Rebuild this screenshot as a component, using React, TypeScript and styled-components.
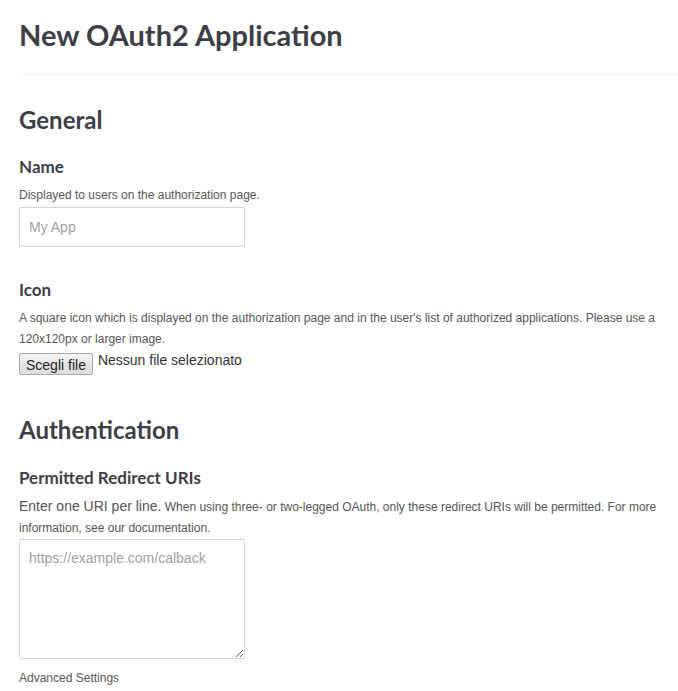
import React from 'react';
import styled, { createGlobalStyle } from 'styled-components';

const GlobalStyle = createGlobalStyle`
  html, body {
    margin: 0;
    padding: 0;
    background: #ffffff;
  }
  body {
    font-family: "Liberation Sans", Arial, sans-serif;
    color: #555555;
  }
`;

const Page = styled.div`
  padding: 17px 0 0 19px;
  display: flex;
  flex-direction: column;
`;

const PageTitle = styled.h1`
  margin: 0;
  font-family: "Lato", "Open Sans", sans-serif;
  font-size: 29px;
  font-weight: 700;
  line-height: 36px;
  color: #3d3e47;
`;

const Divider = styled.hr`
  margin: 21px 0 0 0;
  border: none;
  border-top: 1px solid #efefef;
`;

const SectionTitle = styled.h2<{ $gap: number }>`
  margin: ${(p) => p.$gap}px 0 0 0;
  font-family: "Lato", "Open Sans", sans-serif;
  font-size: 24px;
  font-weight: 700;
  line-height: 30px;
  color: #3d3e47;
`;

const FieldLabel = styled.h3<{ $gap: number }>`
  margin: ${(p) => p.$gap}px 0 0 0;
  font-family: "Lato", "Open Sans", sans-serif;
  font-size: 17px;
  font-weight: 700;
  line-height: 22px;
  color: #3d3e47;
`;

const Hint = styled.p`
  margin: 7px 0 0 0;
  padding-right: 19px;
  font-size: 12px;
  line-height: 21px;
  color: #555555;
`;

const Lead = styled.span`
  font-size: 14px;
`;

const TextInput = styled.input`
  box-sizing: border-box;
  margin-top: 1px;
  width: 226px;
  height: 40px;
  padding: 0 9px;
  border: 1px solid #d5d5d5;
  border-radius: 2px;
  font-family: "Liberation Sans", Arial, sans-serif;
  font-size: 14px;
  color: #333;
  outline: none;
  &::placeholder {
    color: #a0a0a0;
  }
`;

const TextArea = styled.textarea`
  box-sizing: border-box;
  margin-top: 0;
  width: 226px;
  height: 120px;
  padding: 10px 9px;
  border: 1px solid #d5d5d5;
  border-radius: 2px;
  font-family: "Liberation Sans", Arial, sans-serif;
  font-size: 14px;
  color: #333;
  outline: none;
  resize: both;
  &::placeholder {
    color: #a0a0a0;
  }
`;

const FileRow = styled.div`
  margin-top: 3px;
  display: flex;
  align-items: flex-start;
  gap: 5px;
`;

const FileButton = styled.button`
  box-sizing: border-box;
  height: 22px;
  padding: 1px 6px 0;
  border: 1px solid #a9a9a9;
  border-radius: 2px;
  background: linear-gradient(#f2f2f2, #dcdcdc);
  font-family: "Liberation Sans", Arial, sans-serif;
  font-size: 14px;
  line-height: 20px;
  color: #222;
`;

const FileStatus = styled.span`
  font-size: 14px;
  line-height: 14px;
  color: #333;
`;

const SmallLink = styled.div`
  margin-top: 11px;
  font-size: 12px;
  line-height: 16px;
  color: #555555;
`;

export default function App() {
  return (
    <>
      <GlobalStyle />
      <Page>
        <PageTitle>New OAuth2 Application</PageTitle>
        <Divider />

        <SectionTitle $gap={30}>General</SectionTitle>

        <FieldLabel $gap={21}>Name</FieldLabel>
        <Hint>Displayed to users on the authorization page.</Hint>
        <TextInput placeholder="My App" />

        <FieldLabel $gap={32}>Icon</FieldLabel>
        <Hint>
          A square icon which is displayed on the authorization page and in the user's list of authorized
          applications. Please use a 120x120px or larger image.
        </Hint>
        <FileRow>
          <FileButton type="button">Scegli file</FileButton>
          <FileStatus>Nessun file selezionato</FileStatus>
        </FileRow>

        <SectionTitle $gap={40}>Authentication</SectionTitle>

        <FieldLabel $gap={22}>Permitted Redirect URIs</FieldLabel>
        <Hint>
          <Lead>Enter one URI per line.</Lead> When using three- or two-legged OAuth, only these redirect URIs
          will be permitted. For more information, see our documentation.
        </Hint>
        <TextArea placeholder="https://example.com/calback" />

        <SmallLink>Advanced Settings</SmallLink>
      </Page>
    </>
  );
}
